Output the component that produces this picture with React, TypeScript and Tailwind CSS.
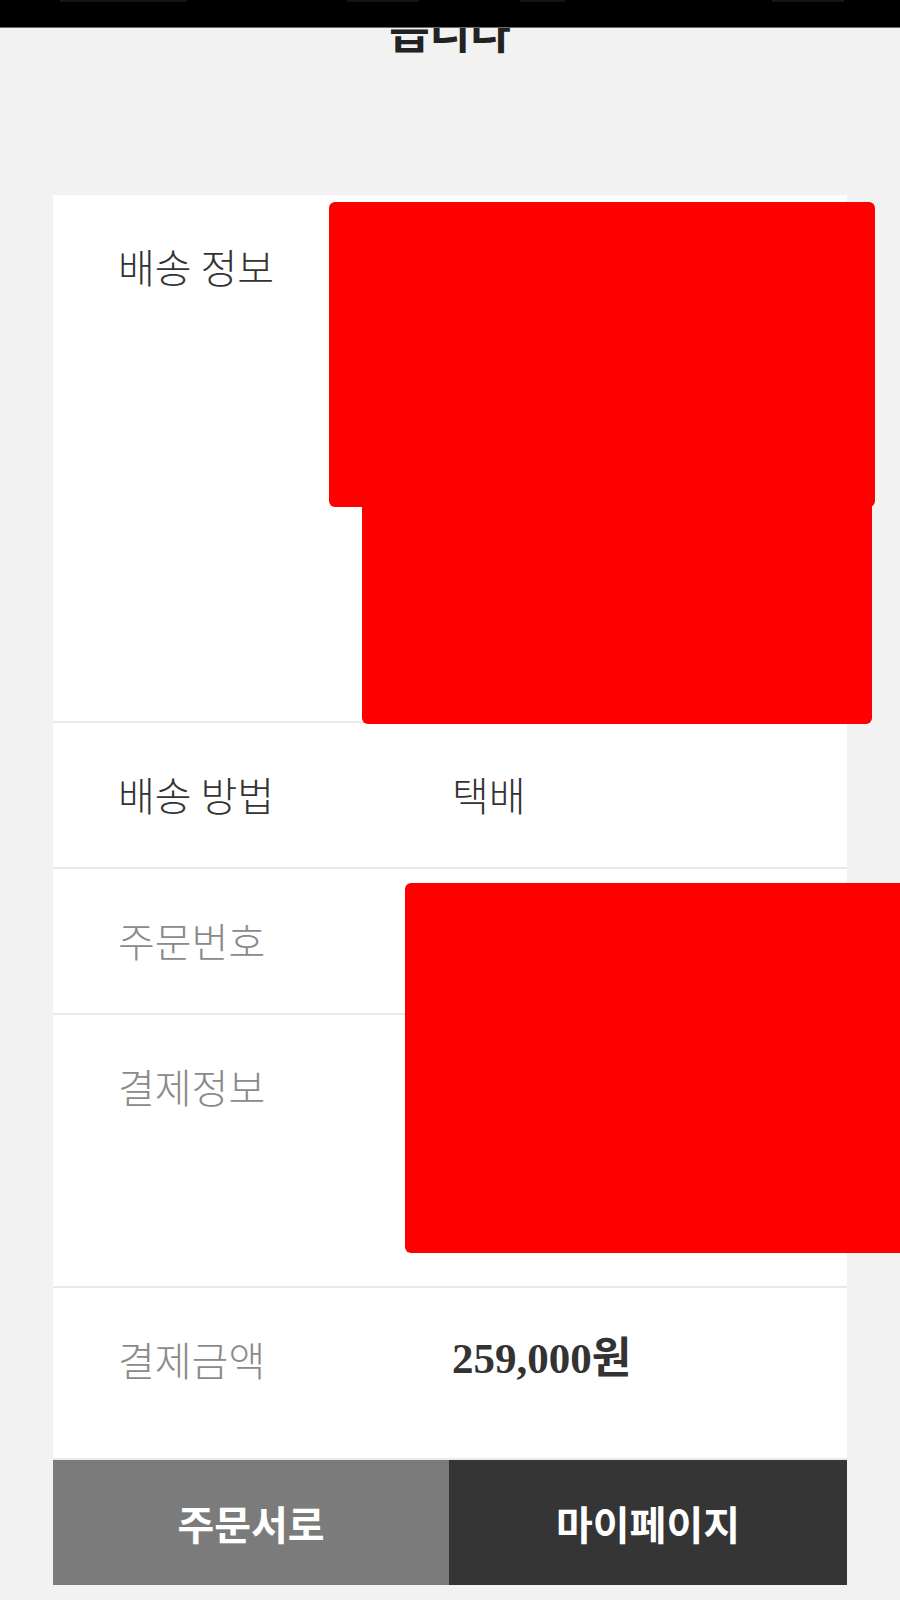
const rows = [
	{ label: "배송 정보", value: "", height: "h-[528px]", tone: "text-[#333333]" },
	{ label: "배송 방법", value: "택배", height: "h-[146px]", tone: "text-[#333333]" },
	{ label: "주문번호", value: "", height: "h-[146px]", tone: "text-[#8a8a8a]" },
	{ label: "결제정보", value: "", height: "h-[273px]", tone: "text-[#8a8a8a]" },
];

function InfoRow({
	label,
	value,
	height,
	tone,
}: {
	label: string;
	value: string;
	height: string;
	tone: string;
}) {
	return (
		<div className={`${height} flex items-start bg-white border-b-2 border-[#e9e9e9] pl-[65px] pt-[43px]`}>
			<div className={`w-[334px] shrink-0 text-[40px] font-light leading-[56px] ${tone}`}>{label}</div>
			{value && <div className="text-[40px] font-light leading-[56px] text-[#333333]">{value}</div>}
		</div>
	);
}

export default function App() {
	return (
		<div className="relative min-h-[1600px] overflow-hidden bg-[#f2f2f2] font-['Noto_Sans_CJK_KR',sans-serif]">
			{/* status bar (cut off) */}
			<div className="absolute inset-x-0 top-0 z-10 h-[28px] border-b border-[#6b6b6b] bg-black">
				<div className="flex items-start">
					<span className="ml-[60px] h-[2px] w-[127px] bg-[#151515]" />
					<span className="ml-[160px] h-[2px] w-[72px] bg-[#151515]" />
					<span className="ml-[101px] h-[2px] w-[45px] bg-[#151515]" />
					<span className="ml-[207px] h-[2px] w-[72px] bg-[#151515]" />
				</div>
			</div>

			{/* page title, mostly hidden under the status bar */}
			<div className="pt-[8px] text-center text-[44px] font-bold leading-[44px] text-[#222222]">
				습니다
			</div>

			{/* order summary card */}
			<main className="mx-[53px] mt-[143px] w-[794px]">
				{rows.map((row) => (
					<InfoRow key={row.label} {...row} />
				))}
				<div className="flex h-[172px] items-start bg-white border-b-2 border-[#e9e9e9] pl-[65px] pt-[43px]">
					<div className="w-[334px] shrink-0 text-[40px] font-light leading-[56px] text-[#8a8a8a]">결제금액</div>
					<div className="font-['Liberation_Serif','Noto_Sans_CJK_KR',serif] text-[43px] font-bold leading-[56px] text-[#333333]">
						259,000원
					</div>
				</div>
				<div className="flex h-[125px]">
					<button
						type="button"
						className="flex w-[396px] items-center justify-center bg-[#7b7b7b] text-[40px] font-bold text-white"
					>
						주문서로
					</button>
					<button
						type="button"
						className="flex flex-1 items-center justify-center bg-[#353535] text-[40px] font-bold text-white"
					>
						마이페이지
					</button>
				</div>
			</main>

			{/* redaction overlays */}
			<div className="absolute left-[362px] top-[490px] h-[234px] w-[510px] rounded-[6px] bg-[#ff0000]" />
			<div className="absolute left-[329px] top-[202px] h-[305px] w-[546px] rounded-[6px] bg-[#ff0000]" />
			<div className="absolute left-[405px] top-[883px] h-[370px] w-[520px] rounded-[6px] bg-[#ff0000]" />
		</div>
	);
}
